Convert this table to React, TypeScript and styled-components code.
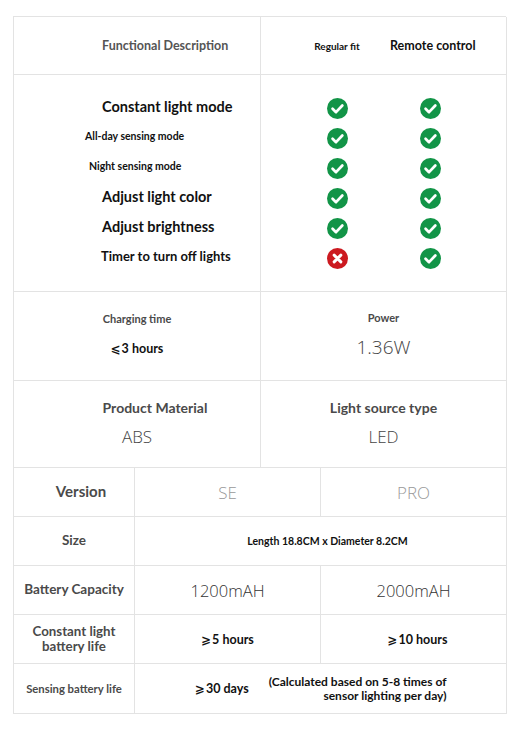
import React from 'react';
import styled, { createGlobalStyle } from 'styled-components';

const GlobalStyle = createGlobalStyle`
  html, body {
    margin: 0;
    padding: 0;
    background: #ffffff;
  }
  body {
    font-family: Lato, "Liberation Sans", sans-serif;
    color: #111;
  }
`;

const LINE = '#e3e3e3';

const Page = styled.div`
  width: 493px;
  padding: 16px 0 30px 13px;
`;

const TopTable = styled.div`
  display: grid;
  grid-template-columns: 247px 246px;
  border-top: 1px solid ${LINE};
  border-left: 1px solid ${LINE};
`;

const BottomTable = styled.div`
  display: grid;
  grid-template-columns: 121px 186px 186px;
  border-left: 1px solid ${LINE};
`;

const Cell = styled.div<{ $h: number; $span?: number; $align?: 'center' | 'start'; $indent?: number; $lift?: number }>`
  box-sizing: border-box;
  height: ${p => p.$h}px;
  grid-column: span ${p => p.$span ?? 1};
  border-right: 1px solid ${LINE};
  border-bottom: 1px solid ${LINE};
  display: flex;
  flex-direction: column;
  justify-content: center;
  align-items: ${p => (p.$align === 'start' ? 'flex-start' : 'center')};
  padding-left: ${p => p.$indent ?? 0}px;
  padding-bottom: ${p => p.$lift ?? 0}px;
`;

const HeadTitle = styled.div`
  font-size: 12.5px;
  font-weight: 700;
  color: #555;
`;

const HeadPair = styled.div`
  display: flex;
  align-items: center;
  gap: 13px;
  padding-left: 36px;
  align-self: stretch;
`;

const HeadLabel = styled.div<{ $size: number }>`
  width: 80px;
  text-align: center;
  font-size: ${p => p.$size}px;
  font-weight: 700;
  color: #111;
  white-space: nowrap;
`;

const FeatureList = styled.div`
  display: flex;
  flex-direction: column;
  padding: 18px 0 18px;
  align-self: stretch;
`;

const FeatureRow = styled.div<{ $indent: number; $size: number }>`
  height: 30px;
  display: flex;
  align-items: center;
  padding-left: ${p => p.$indent}px;
  font-size: ${p => p.$size}px;
  font-weight: 700;
  color: #111;
  white-space: nowrap;
  position: relative;
  top: -2px;
`;

const MarkRow = styled.div`
  height: 30px;
  display: flex;
  align-items: center;
  gap: 13px;
  padding-left: 36px;
`;

const MarkSlot = styled.div`
  width: 80px;
  display: flex;
  justify-content: center;
`;

const SpecLabel = styled.div<{ $size: number; $nudge?: number }>`
  font-size: ${p => p.$size}px;
  font-weight: 700;
  color: #4a4a4a;
  margin-left: ${p => p.$nudge ?? 0}px;
  text-align: center;
  line-height: 1.15;
  white-space: nowrap;
`;

const SpecBold = styled.div<{ $size: number; $nudge?: number }>`
  font-size: ${p => p.$size}px;
  font-weight: 700;
  color: #111;
  margin-left: ${p => p.$nudge ?? 0}px;
  white-space: nowrap;
`;

const SpecLight = styled.div<{ $size: number; $tone?: string }>`
  font-family: "Open Sans", "Noto Sans", sans-serif;
  font-size: ${p => p.$size}px;
  font-weight: 300;
  color: ${p => p.$tone ?? '#333'};
  white-space: nowrap;
`;

const Stack = styled.div<{ $gap: number }>`
  display: flex;
  flex-direction: column;
  align-items: center;
  gap: ${p => p.$gap}px;
`;

const Sym = styled.span`
  font-family: "DejaVu Sans", sans-serif;
  font-weight: 700;
  font-size: 0.95em;
  margin-right: 1px;
`;

const SensingLine = styled.div`
  display: flex;
  align-items: center;
  align-self: stretch;
  padding-left: 60px;
  gap: 20px;
`;

const Note = styled.div`
  font-size: 12px;
  font-weight: 700;
  color: #111;
  text-align: right;
  line-height: 14px;
  white-space: nowrap;
`;

const Mark = ({ ok }: { ok: boolean }) => (
  <svg width="21" height="21" viewBox="0 0 20 20">
    <circle cx="10" cy="10" r="10" fill={ok ? '#129447' : '#cc1a20'} />
    {ok ? (
      <path d="M5.3 10.3 L8.6 13.5 L14.6 7.2" fill="none" stroke="#fff" strokeWidth="2.6" strokeLinecap="round" strokeLinejoin="round" />
    ) : (
      <path d="M6.8 6.8 L13.2 13.2 M13.2 6.8 L6.8 13.2" fill="none" stroke="#fff" strokeWidth="2.8" strokeLinecap="round" />
    )}
  </svg>
);

const features = [
  { name: 'Constant light mode', indent: 88, size: 14.5, regular: true },
  { name: 'All-day sensing mode', indent: 71, size: 10.5, regular: true },
  { name: 'Night sensing mode', indent: 75, size: 10.5, regular: true },
  { name: 'Adjust light color', indent: 88, size: 14.5, regular: true },
  { name: 'Adjust brightness', indent: 88, size: 14.5, regular: true },
  { name: 'Timer to turn off lights', indent: 87, size: 13, regular: false },
];

export default function App() {
  return (
    <Page>
      <GlobalStyle />
      <TopTable>
        <Cell $h={58} $align="start" $indent={88}>
          <HeadTitle>Functional Description</HeadTitle>
        </Cell>
        <Cell $h={58}>
          <HeadPair>
            <HeadLabel $size={10}>Regular fit</HeadLabel>
            <HeadLabel $size={12.5}>Remote control</HeadLabel>
          </HeadPair>
        </Cell>

        <Cell $h={217} $align="start">
          <FeatureList>
            {features.map(f => (
              <FeatureRow key={f.name} $indent={f.indent} $size={f.size}>
                {f.name}
              </FeatureRow>
            ))}
          </FeatureList>
        </Cell>
        <Cell $h={217} $align="start">
          <FeatureList>
            {features.map(f => (
              <MarkRow key={f.name}>
                <MarkSlot><Mark ok={f.regular} /></MarkSlot>
                <MarkSlot><Mark ok /></MarkSlot>
              </MarkRow>
            ))}
          </FeatureList>
        </Cell>

        <Cell $h={89} $lift={3}>
          <Stack $gap={16}>
            <SpecLabel $size={11}>Charging time</SpecLabel>
            <SpecBold $size={12.5}><Sym>⩽</Sym>3 hours</SpecBold>
          </Stack>
        </Cell>
        <Cell $h={89}>
          <Stack $gap={9}>
            <SpecLabel $size={11}>Power</SpecLabel>
            <SpecLight $size={19} $tone="#444">1.36W</SpecLight>
          </Stack>
        </Cell>

        <Cell $h={87}>
          <Stack $gap={8}>
            <SpecLabel $size={14} $nudge={36}>Product Material</SpecLabel>
            <SpecLight $size={17} $tone="#444">ABS</SpecLight>
          </Stack>
        </Cell>
        <Cell $h={87}>
          <Stack $gap={8}>
            <SpecLabel $size={14}>Light source type</SpecLabel>
            <SpecLight $size={17} $tone="#444">LED</SpecLight>
          </Stack>
        </Cell>
      </TopTable>

      <BottomTable>
        <Cell $h={49}>
          <SpecLabel $size={15} $nudge={14}>Version</SpecLabel>
        </Cell>
        <Cell $h={49}>
          <SpecLight $size={17} $tone="#999">SE</SpecLight>
        </Cell>
        <Cell $h={49}>
          <SpecLight $size={17} $tone="#999">PRO</SpecLight>
        </Cell>

        <Cell $h={49}>
          <SpecLabel $size={13.5}>Size</SpecLabel>
        </Cell>
        <Cell $h={49} $span={2}>
          <SpecBold $size={10.5} $nudge={14}>Length 18.8CM x Diameter 8.2CM</SpecBold>
        </Cell>

        <Cell $h={49}>
          <SpecLabel $size={13.5}>Battery Capacity</SpecLabel>
        </Cell>
        <Cell $h={49}>
          <SpecLight $size={16.5}>1200mAH</SpecLight>
        </Cell>
        <Cell $h={49}>
          <SpecLight $size={16.5}>2000mAH</SpecLight>
        </Cell>

        <Cell $h={49}>
          <SpecLabel $size={13.3}>Constant light<br />battery life</SpecLabel>
        </Cell>
        <Cell $h={49}>
          <SpecBold $size={12.5}><Sym>⩾</Sym>5 hours</SpecBold>
        </Cell>
        <Cell $h={49}>
          <SpecBold $size={12.5} $nudge={8}><Sym>⩾</Sym>10 hours</SpecBold>
        </Cell>

        <Cell $h={50}>
          <SpecLabel $size={11.3}>Sensing battery life</SpecLabel>
        </Cell>
        <Cell $h={50} $span={2} $align="start">
          <SensingLine>
            <SpecBold $size={12.5}><Sym>⩾</Sym>30 days</SpecBold>
            <Note>(Calculated based on 5-8 times of<br />sensor lighting per day)</Note>
          </SensingLine>
        </Cell>
      </BottomTable>
    </Page>
  );
}
